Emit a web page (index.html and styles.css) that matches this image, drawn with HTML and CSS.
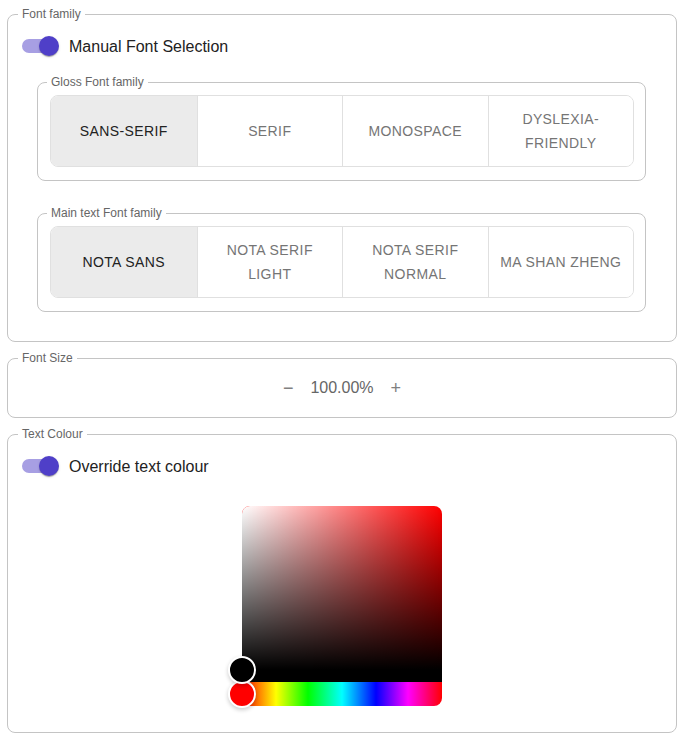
FILE: index.html
```html
<!DOCTYPE html>
<html>
<head>
<meta charset="utf-8">
<link rel="stylesheet" href="styles.css">
</head>
<body>
<div class="page">
  <fieldset class="box">
    <legend class="legend">Font family</legend>
    <div class="toggle-row">
      <span class="switch"><span class="track"></span><span class="thumb"></span></span>
      <span class="toggle-label">Manual Font Selection</span>
    </div>
    <fieldset class="sub">
      <legend class="legend sub-legend">Gloss Font family</legend>
      <div class="group">
        <button class="opt selected">SANS-SERIF</button>
        <button class="opt">SERIF</button>
        <button class="opt">MONOSPACE</button>
        <button class="opt">DYSLEXIA-<br>FRIENDLY</button>
      </div>
    </fieldset>
    <fieldset class="sub sub-second">
      <legend class="legend sub-legend">Main text Font family</legend>
      <div class="group">
        <button class="opt selected">NOTA SANS</button>
        <button class="opt">NOTA SERIF<br>LIGHT</button>
        <button class="opt">NOTA SERIF<br>NORMAL</button>
        <button class="opt">MA SHAN ZHENG</button>
      </div>
    </fieldset>
  </fieldset>

  <fieldset class="box box-size">
    <legend class="legend">Font Size</legend>
    <div class="size-row">
      <span class="step">−</span>
      <span class="size-value">100.00%</span>
      <span class="step">+</span>
    </div>
  </fieldset>

  <fieldset class="box box-colour">
    <legend class="legend">Text Colour</legend>
    <div class="toggle-row">
      <span class="switch"><span class="track"></span><span class="thumb"></span></span>
      <span class="toggle-label">Override text colour</span>
    </div>
    <div class="picker">
      <div class="saturation">
        <span class="pointer pointer-black"></span>
      </div>
      <div class="hue">
        <span class="pointer pointer-red"></span>
      </div>
    </div>
  </fieldset>
</div>
</body>
</html>
```

FILE: styles.css
```css
* { box-sizing: border-box; }

html, body {
  margin: 0;
  padding: 0;
  background: #fff;
  font-family: "Liberation Sans", Arial, sans-serif;
}

.page {
  padding: 7px 7px 0 7px;
}

.box {
  margin: 0;
  min-width: 0;
  border: 1px solid #c4c4c4;
  border-radius: 8px;
  padding: 0 14px 29px 14px;
}

.box-size {
  margin-top: 9px;
  padding-bottom: 12px;
}

.box-colour {
  margin-top: 9px;
  padding-bottom: 26px;
}

.legend {
  font-size: 12px;
  line-height: 14px;
  color: #666;
  padding: 0 4px;
  margin-left: -4px;
}

.sub-legend {
  margin-left: -3px;
}

.toggle-row {
  margin-top: 6px;
  height: 38px;
  display: flex;
  align-items: center;
  gap: 10px;
}

.switch {
  position: relative;
  width: 37px;
  height: 20px;
  flex: none;
}

.track {
  position: absolute;
  left: 0;
  top: 3px;
  width: 34px;
  height: 14px;
  border-radius: 7px;
  background: #a79fe3;
}

.thumb {
  position: absolute;
  left: 17px;
  top: 0;
  width: 20px;
  height: 20px;
  border-radius: 50%;
  background: #4f3fc8;
  box-shadow: 0 2px 1px -1px rgba(0,0,0,0.2), 0 1px 1px 0 rgba(0,0,0,0.14), 0 1px 3px 0 rgba(0,0,0,0.12);
}

.toggle-label {
  font-size: 16px;
  line-height: 20px;
  padding-top: 1px;
  color: #222;
}

.sub {
  margin: 10px 16px 0 15px;
  min-width: 0;
  border: 1px solid #c4c4c4;
  border-radius: 8px;
  padding: 6px 11px 13px 12px;
}

.sub-second {
  margin-top: 25px;
}

.group {
  display: grid;
  grid-template-columns: repeat(4, 1fr);
  border: 1px solid #e0e0e0;
  border-radius: 8px;
  overflow: hidden;
  height: 72px;
}

.opt {
  margin: 0;
  border: 0;
  border-left: 1px solid #e0e0e0;
  background: #fff;
  font-family: "Liberation Sans", Arial, sans-serif;
  font-size: 14px;
  line-height: 24.5px;
  letter-spacing: 0.4px;
  color: #757575;
  padding: 0 8px;
  text-align: center;
}

.opt:first-child {
  border-left: 0;
}

.opt.selected {
  background: #ebebeb;
  color: #222;
}

.size-row {
  margin-top: 6px;
  height: 34px;
  display: flex;
  align-items: center;
  justify-content: center;
  gap: 17px;
  font-size: 16px;
}

.size-value {
  color: #666;
}

.step {
  color: #808080;
  font-size: 18px;
}

.picker {
  margin: 21px auto 0;
  width: 200px;
  height: 200px;
  display: flex;
  flex-direction: column;
}

.saturation {
  position: relative;
  flex: 1;
  border-radius: 8px 8px 0 0;
  border-bottom: 12px solid #000;
  background-color: #f00;
  background-image: linear-gradient(0deg, #000, transparent), linear-gradient(90deg, #fff, rgba(255,255,255,0));
}

.hue {
  position: relative;
  height: 24px;
  flex: none;
  border-radius: 0 0 8px 8px;
  background: linear-gradient(90deg, #f00 0, #ff0 17%, #0f0 33%, #0ff 50%, #00f 67%, #f0f 83%, #f00);
}

.pointer {
  position: absolute;
  width: 28px;
  height: 28px;
  border: 2px solid #fff;
  border-radius: 50%;
  box-shadow: 0 2px 4px rgba(0,0,0,0.2);
  transform: translate(-50%, -50%);
  left: 0;
}

.pointer-black {
  top: 100%;
  background: #000;
  z-index: 3;
}

.pointer-red {
  top: 50%;
  background: #f00;
  z-index: 2;
}
```
